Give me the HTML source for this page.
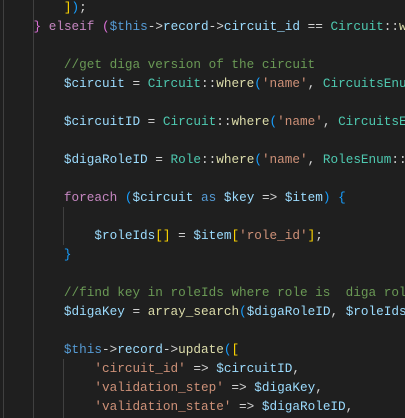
<!DOCTYPE html>
<html><head><meta charset="utf-8"><style>
html,body{margin:0;padding:0;background:#1f1f1f;width:405px;height:406px;overflow:hidden;}
.wrap{position:absolute;left:0;top:-2px;width:405px;height:420px;overflow:hidden;}
.g{position:absolute;top:0;height:420px;width:1px;background:#404040;}
pre{position:absolute;left:3px;top:0;margin:0;font-family:"Liberation Mono",monospace;font-size:12.7px;line-height:19px;color:#d4d4d4;white-space:pre;}
.v{color:#9cdcfe}.k{color:#c586c0}.s{color:#ce9178}.c{color:#6a9955}.t{color:#4ec9b0}.f{color:#dcdcaa}.b{color:#569cd6}
.y{color:#ffd700}.p{color:#da70d6}.u{color:#179fff}
</style></head><body><div class="wrap">
<div class="g" style="left:3px"></div>
<div class="g" style="left:33px;top:19px"></div>
<div class="g" style="left:33px;top:0;height:19px"></div>
<div class="g" style="left:63px;top:209px;height:38px"></div>
<div class="g" style="left:63px;top:361px;height:60px"></div>
<pre>        <span class="y">]</span><span class="u">)</span>;
    <span class="p">}</span> <span class="k">elseif</span> <span class="p">(</span><span class="b">$this</span>-&gt;<span class="v">record</span>-&gt;<span class="v">circuit_id</span> == <span class="t">Circuit</span>::<span class="f">where</span>

        <span class="c">//get diga version of the circuit</span>
        <span class="v">$circuit</span> = <span class="t">Circuit</span>::<span class="f">where</span><span class="u">(</span><span class="s">'name'</span>, <span class="t">CircuitsEnum</span>

        <span class="v">$circuitID</span> = <span class="t">Circuit</span>::<span class="f">where</span><span class="u">(</span><span class="s">'name'</span>, <span class="t">CircuitsEnum</span>

        <span class="v">$digaRoleID</span> = <span class="t">Role</span>::<span class="f">where</span><span class="u">(</span><span class="s">'name'</span>, <span class="t">RolesEnum</span>::<span class="v">D</span>

        <span class="k">foreach</span> <span class="u">(</span><span class="v">$circuit</span> <span class="b">as</span> <span class="v">$key</span> =&gt; <span class="v">$item</span><span class="u">)</span> <span class="u">{</span>

            <span class="v">$roleIds</span><span class="y">[]</span> = <span class="v">$item</span><span class="y">[</span><span class="s">'role_id'</span><span class="y">]</span>;
        <span class="u">}</span>

        <span class="c">//find key in roleIds where role is  diga role</span>
        <span class="v">$digaKey</span> = <span class="f">array_search</span><span class="u">(</span><span class="v">$digaRoleID</span>, <span class="v">$roleIds</span>

        <span class="b">$this</span>-&gt;<span class="v">record</span>-&gt;<span class="f">update</span><span class="u">(</span><span class="y">[</span>
            <span class="s">'circuit_id'</span> =&gt; <span class="v">$circuitID</span>,
            <span class="s">'validation_step'</span> =&gt; <span class="v">$digaKey</span>,
            <span class="s">'validation_state'</span> =&gt; <span class="v">$digaRoleID</span>,
</pre></div></body></html>
